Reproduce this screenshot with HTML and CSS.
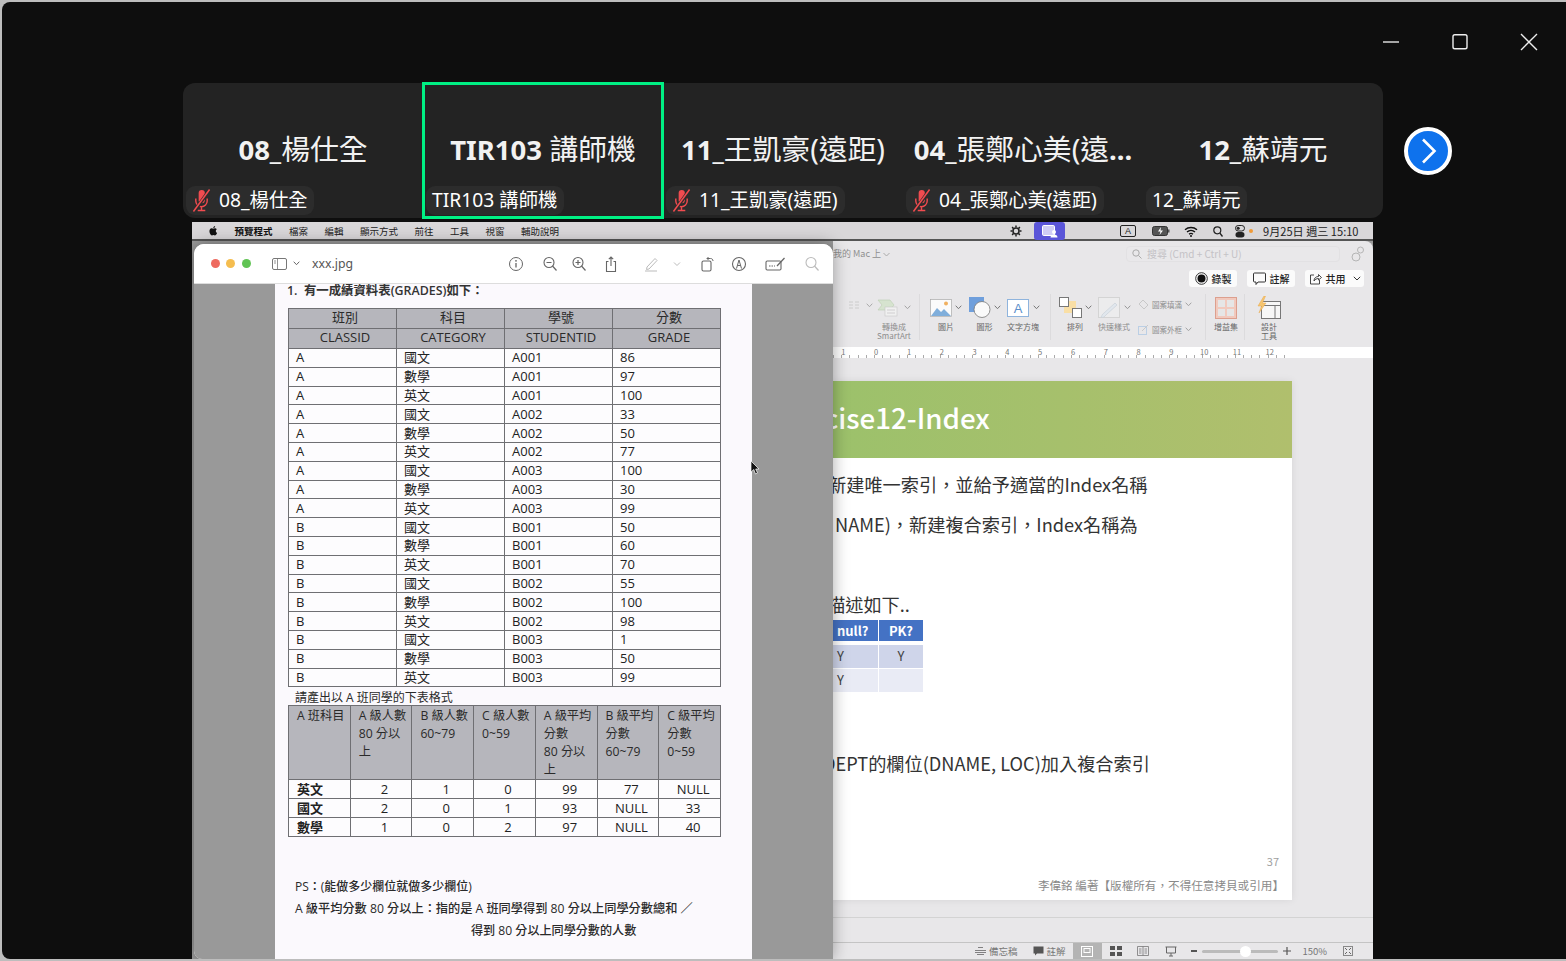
FILE: index.html
```html
<!DOCTYPE html>
<html lang="zh-Hant">
<head>
<meta charset="utf-8">
<title>TIR103</title>
<link rel="stylesheet" href="styles.css">
</head>
<body>
<div class="window">
  <header class="titlebar">
    <button class="winbtn"><svg width="18" height="18" viewBox="0 0 18 18"><path d="M1 9h16" stroke="#d8d8d8" stroke-width="1.4"/></svg></button>
    <button class="winbtn"><svg width="18" height="18" viewBox="0 0 18 18"><rect x="2" y="1.8" width="14" height="14" rx="1.8" fill="none" stroke="#eee" stroke-width="1.4"/></svg></button>
    <button class="winbtn"><svg width="18" height="18" viewBox="0 0 18 18"><path d="M1 1l16 16M17 1L1 17" stroke="#eee" stroke-width="1.4"/></svg></button>
  </header>

  <section class="strip-row">
    <div class="strip">
      <div class="tile"><div class="name"><b>08_</b>楊仕全</div><div class="pill"><svg class="mute" viewBox="0 0 20 24"><use href="#mic"/></svg>08_楊仕全</div></div>
      <div class="tile active"><div class="name"><b>TIR103</b>&nbsp;講師機</div><div class="pill nomic">TIR103 講師機</div></div>
      <div class="tile"><div class="name"><b>11_</b>王凱豪(遠距)</div><div class="pill"><svg class="mute" viewBox="0 0 20 24"><use href="#mic"/></svg>11_王凱豪(遠距)</div></div>
      <div class="tile"><div class="name"><b>04_</b>張鄭心美(遠<b>...</b></div><div class="pill"><svg class="mute" viewBox="0 0 20 24"><use href="#mic"/></svg>04_張鄭心美(遠距)</div></div>
      <div class="tile"><div class="name"><b>12_</b>蘇靖元</div><div class="pill nomic">12_蘇靖元</div></div>
    </div>
    <button class="next"><svg width="40" height="40" viewBox="0 0 40 40"><path d="M15 8.500l11.500 11.500L15 31.500" fill="none" stroke="#fff" stroke-width="2.600"/></svg></button>
  </section>

  <svg class="defs" width="0" height="0"><defs>
    <symbol id="mic" viewBox="0 0 20 24">
      <rect x="7" y="1" width="6.500" height="14" rx="3.200" fill="#f04b4f"/>
      <path d="M4 10v2.500a6 6 0 0 0 12 0V10M10 18.500V22M6 22.500h8" fill="none" stroke="#f04b4f" stroke-width="1.500"/>
      <path d="M19 0L2 24" stroke="#2c2c2c" stroke-width="3.600"/>
      <path d="M18.500 .5L1.500 23.500" stroke="#f04b4f" stroke-width="1.600"/>
    </symbol>
  </defs></svg>

  <main class="share">
    <div class="menubar">
      <svg class="apple" viewBox="0 0 24 24"><path d="M17.050 12.040c-.03-2.600 2.130-3.850 2.220-3.910-1.210-1.770-3.090-2.010-3.760-2.040-1.600-.16-3.120.94-3.930.94-.81 0-2.060-.92-3.390-.89-1.740.03-3.350 1.010-4.250 2.570-1.810 3.140-.46 7.800 1.300 10.350.86 1.250 1.890 2.650 3.240 2.600 1.300-.05 1.790-.84 3.360-.84 1.570 0 2.010.84 3.390.81 1.400-.02 2.280-1.270 3.140-2.530.99-1.450 1.400-2.850 1.420-2.930-.03-.01-2.720-1.040-2.740-4.130zM14.470 4.400c.72-.87 1.200-2.080 1.070-3.280-1.030.04-2.280.69-3.020 1.550-.66.77-1.240 2-1.080 3.180 1.150.09 2.320-.58 3.030-1.450z"/></svg>
      <b>預覽程式</b><span>檔案</span><span>編輯</span><span>顯示方式</span><span>前往</span><span>工具</span><span>視窗</span><span>輔助說明</span>
      <svg class="m-gear" viewBox="0 0 12 12"><circle cx="6" cy="6" r="3" fill="none" stroke="#222" stroke-width="1.500"/><path d="M6 .5v2M6 9.500v2M.5 6h2M9.500 6h2M2.100 2.100l1.400 1.400M8.500 8.500l1.400 1.400M2.100 9.900l1.400-1.400M8.500 3.500l1.400-1.400" stroke="#222" stroke-width="1.500"/></svg>
      <div class="m-purple"><svg width="16" height="13" viewBox="0 0 16 13"><rect x=".5" y=".5" width="12" height="10" rx="1.200" fill="#cfcdf5" stroke="#fff"/><circle cx="12" cy="7" r="2" fill="#fff"/><path d="M8.500 12.500c0-2 1.500-3 3.500-3s3.500 1 3.500 3z" fill="#fff"/></svg></div>
      <div class="m-a">A</div>
      <svg class="m-batt" viewBox="0 0 18 10"><rect x=".5" y=".5" width="15" height="9" rx="2" fill="#555" stroke="#333"/><path d="M9 1L6 5.500h2.500L7.500 9 11 4.500H8.500z" fill="#fff"/><rect x="16" y="3.500" width="1.500" height="3" fill="#555"/></svg>
      <svg class="m-wifi" viewBox="0 0 14 11"><path d="M1 3.800c3.400-3 8.600-3 12 0M3 6c2.300-2 5.700-2 8 0M5 8.200c1.200-1 2.800-1 4 0" fill="none" stroke="#111" stroke-width="1.400"/><circle cx="7" cy="10" r="1" fill="#111"/></svg>
      <svg class="m-search" viewBox="0 0 10 11"><circle cx="4.300" cy="4.300" r="3.500" fill="none" stroke="#222" stroke-width="1.200"/><path d="M6.800 7l2.700 3.500" stroke="#222" stroke-width="1.300"/></svg>
      <svg class="m-ctl" viewBox="0 0 10 13"><rect x=".5" y=".5" width="9" height="5.500" rx="2.700" fill="none" stroke="#222"/><rect x=".5" y="7" width="9" height="5.500" rx="2.700" fill="#222"/><circle cx="3.200" cy="3.200" r="1.500" fill="#222"/></svg>
      <i class="m-dot"></i>
      <span class="m-date">9月25日 週三 15:10</span>
    </div>

    <div class="desktop">
      <!-- PowerPoint window -->
      <section class="ppt">
        <div class="ppt-title">
          <span class="ppt-doc">我的 Mac 上 <svg width="7" height="5" viewBox="0 0 7 5"><path d="M.5 1l3 3 3-3" fill="none" stroke="#aaa"/></svg></span>
          <div class="ppt-search"><svg width="10" height="10" viewBox="0 0 10 10"><circle cx="4" cy="4" r="3.200" fill="none" stroke="#aaa"/><path d="M6.500 6.500l3 3" stroke="#aaa"/></svg>搜尋 (Cmd + Ctrl + U)</div>
          <svg class="ppt-people" width="14" height="16" viewBox="0 0 14 16"><circle cx="9.500" cy="4" r="3" fill="none" stroke="#b5b5b5"/><rect x="1" y="7" width="8" height="8" rx="4" fill="none" stroke="#b5b5b5"/></svg>
        </div>
        <div class="ppt-actions">
          <div class="act act-rec"><svg width="13" height="13" viewBox="0 0 13 13"><circle cx="6.500" cy="6.500" r="5.800" fill="none" stroke="#222" stroke-width=".9"/><circle cx="6.500" cy="6.500" r="4" fill="#111"/></svg>錄製</div>
          <div class="act act-cmt"><svg width="13" height="13" viewBox="0 0 13 13"><path d="M1.500 1h10a1 1 0 0 1 1 1v7a1 1 0 0 1-1 1H5l-2 2.500V10H1.500a1 1 0 0 1-1-1V2a1 1 0 0 1 1-1z" fill="none" stroke="#333"/></svg>註解</div>
          <div class="act act-share"><svg width="13" height="13" viewBox="0 0 13 13"><path d="M5 3H1.500v9h9V8M5 9c0-3 2-4.500 4.500-4.500V2.500L12.500 5.500 9.500 8V6.500C7.500 6.500 6 7.500 5 9z" fill="none" stroke="#333" stroke-width=".9"/></svg>共用<svg class="act-chev" width="8" height="5" viewBox="0 0 8 5"><path d="M.8.8L4 4 7.200.8" fill="none" stroke="#333"/></svg></div>
        </div>
        <div class="ribbon">
          <div class="rb-lead">
            <svg width="11" height="8" viewBox="0 0 11 8"><path d="M0 1h4M6 1h4M0 4h4M6 4h4M0 7h4M6 7h4" stroke="#ccc"/></svg>
            <svg class="chev" viewBox="0 0 7 5"><path d="M.7.7l2.800 3 2.800-3" fill="none" stroke="#aaa" stroke-width="1"/></svg>
          </div>
          <div class="tool t-smart faded">
            <div class="tool-icon"><svg width="24" height="18" viewBox="0 0 24 18"><path d="M1 1h12l4 5-4 5H1l4-5z" fill="#cfe2c5" stroke="#aac59b" stroke-width=".6"/><rect x="8" y="8" width="12" height="9" fill="#f4f4f4" stroke="#bbb" stroke-width=".6"/><path d="M10 11h8M10 14h8" stroke="#bbb" stroke-width=".8"/></svg><svg class="chev" viewBox="0 0 7 5"><path d="M.7.7l2.800 3 2.800-3" fill="none" stroke="#888"/></svg></div>
            <span>轉換成</span><span>SmartArt</span>
          </div>
          <i class="rb-sep s1"></i>
          <div class="tool t-pic">
            <div class="tool-icon"><svg width="22" height="18" viewBox="0 0 22 18"><rect x=".5" y=".5" width="21" height="17" fill="#fbfbfb" stroke="#aaa" stroke-width=".7"/><path d="M1 17l6-8 4 4 3-3 7 7z" fill="#7faedb"/><circle cx="16" cy="4.500" r="2" fill="#f0b060"/></svg><svg class="chev" viewBox="0 0 7 5"><path d="M.7.7l2.800 3 2.800-3" fill="none" stroke="#777"/></svg></div>
            <span>圖片</span>
          </div>
          <div class="tool t-shape">
            <div class="tool-icon"><svg width="23" height="21" viewBox="0 0 23 21"><rect x="1" y="0" width="15" height="15" fill="#6f9fdc"/><circle cx="14" cy="12.500" r="8" fill="#fafafa" stroke="#777" stroke-width=".8"/></svg><svg class="chev" viewBox="0 0 7 5"><path d="M.7.7l2.800 3 2.800-3" fill="none" stroke="#777"/></svg></div>
            <span>圖形</span>
          </div>
          <div class="tool t-text">
            <div class="tool-icon"><svg width="24" height="20" viewBox="0 0 24 20"><rect x="1.500" y="1.500" width="21" height="17" fill="#fff" stroke="#8fb4dd" stroke-width="1"/><text x="12" y="15" font-size="13" text-anchor="middle" fill="#5b8fcb" font-family="Liberation Sans">A</text></svg><svg class="chev" viewBox="0 0 7 5"><path d="M.7.7l2.800 3 2.800-3" fill="none" stroke="#777"/></svg></div>
            <span>文字方塊</span>
          </div>
          <i class="rb-sep s2"></i>
          <div class="tool t-arr">
            <div class="tool-icon"><svg width="23" height="21" viewBox="0 0 23 21"><rect x="5" y="4" width="12" height="12" fill="#f9dfa6"/><rect x=".5" y=".5" width="9" height="9" fill="#fff" stroke="#777"/><rect x="13.500" y="11.500" width="9" height="9" fill="#fff" stroke="#777"/></svg><svg class="chev" viewBox="0 0 7 5"><path d="M.7.7l2.800 3 2.800-3" fill="none" stroke="#777"/></svg></div>
            <span>排列</span>
          </div>
          <div class="tool t-quick faded">
            <div class="tool-icon"><svg width="23" height="22" viewBox="0 0 23 22"><rect x=".5" y=".5" width="21" height="20" fill="#efefef" stroke="#ccc"/><path d="M19 8L9 17l-3 3c-1 .5-3 .5-3 0 1-1 1-3 3-4L17 6z" fill="#dfe7ef" stroke="#b5c2cf" stroke-width=".6"/></svg><svg class="chev" viewBox="0 0 7 5"><path d="M.7.7l2.800 3 2.800-3" fill="none" stroke="#777"/></svg></div>
            <span>快速樣式</span>
          </div>
          <div class="tool-col faded">
            <div class="col-row"><svg width="11" height="11" viewBox="0 0 11 11"><path d="M5 1l5 5-4 4-5-5z" fill="none" stroke="#bbb"/></svg>圖案填滿<svg class="chev" viewBox="0 0 7 5"><path d="M.7.7l2.800 3 2.800-3" fill="none" stroke="#888"/></svg></div>
            <div class="col-row"><svg width="11" height="11" viewBox="0 0 11 11"><rect x=".5" y="2.500" width="8" height="8" fill="none" stroke="#a9c6e4"/><path d="M4 7l6-6" stroke="#bbb"/></svg>圖案外框<svg class="chev" viewBox="0 0 7 5"><path d="M.7.7l2.800 3 2.800-3" fill="none" stroke="#888"/></svg></div>
          </div>
          <i class="rb-sep s3"></i>
          <div class="tool t-add">
            <div class="tool-icon"><svg width="22" height="22" viewBox="0 0 22 22"><rect x=".5" y=".5" width="21" height="21" fill="#f1c9bd" stroke="#dc9f8e"/><rect x="3" y="3" width="7" height="7" fill="#e6e6e6"/><rect x="12" y="3" width="7" height="7" fill="#e6e6e6"/><rect x="3" y="12" width="7" height="7" fill="#e6e6e6"/><rect x="12" y="12" width="7" height="7" fill="#e6e6e6"/></svg></div>
            <span>增益集</span>
          </div>
          <i class="rb-sep s4"></i>
          <div class="tool t-design">
            <div class="tool-icon"><svg width="24" height="23" viewBox="0 0 24 23"><rect x="4.500" y="5.500" width="19" height="17" fill="#f7f7f7" stroke="#777"/><path d="M4.500 9.500h19M18 9.500v13" stroke="#777"/><path d="M7 0L1 10h3.500L2 17l7-10H5.500L8.500 0z" fill="#f6c56f" stroke="#e8a84c" stroke-width=".5"/></svg></div>
            <span>設計</span><span>工具</span>
          </div>
        </div>
        <div class="ruler">
          <span>1</span><span>0</span><span>1</span><span>2</span><span>3</span><span>4</span><span>5</span><span>6</span><span>7</span><span>8</span><span>9</span><span>10</span><span>11</span><span>12</span>
        </div>
        <div class="canvas">
          <article class="slide">
            <div class="slide-head">cise12-Index</div>
            <p class="l1">新建唯一索引，並給予適當的Index名稱</p>
            <p class="l2">NAME)，新建複合索引，Index名稱為</p>
            <p class="l3">描述如下..</p>
            <div class="s-table">
              <div class="c h">null?</div><div class="c h m">PK?</div>
              <div class="c r1">Y</div><div class="c r1 m">Y</div>
              <div class="c r2">Y</div><div class="c r2 m"></div>
            </div>
            <p class="l4">DEPT的欄位(DNAME, LOC)加入複合索引</p>
            <div class="s-num">37</div>
            <div class="s-credit">李偉銘 編著【版權所有，不得任意拷貝或引用】</div>
          </article>
        </div>
        <div class="notes"></div>
        <footer class="status">
          <span class="st st-notes"><svg width="11" height="10" viewBox="0 0 11 10"><path d="M3 1.500h5M0 4.500h11M0 6.500h11M2 8.500h7" stroke="#666" stroke-width=".8"/></svg>備忘稿</span>
          <span class="st st-cmt"><svg width="11" height="10" viewBox="0 0 11 10"><path d="M.5.500h10v7H4L2 9.500v-2H.5z" fill="#555"/></svg>註解</span>
          <span class="st-view"><svg width="12" height="11" viewBox="0 0 12 11"><rect x=".5" y=".5" width="11" height="10" fill="none" stroke="#fff"/><rect x="3" y="2.500" width="6" height="4" fill="none" stroke="#fff"/></svg></span>
          <svg class="st-grid" width="12" height="10" viewBox="0 0 12 10"><path d="M0 0h5v4H0zM7 0h5v4H7zM0 6h5v4H0zM7 6h5v4H7z" fill="#555"/></svg>
          <svg class="st-book" width="12" height="10" viewBox="0 0 12 10"><path d="M.5.500h11v9H.5zM6 .5v9M2 3h2.500M2 5h2.500M2 7h2.500M7.500 3H10M7.500 5H10M7.500 7H10" fill="none" stroke="#777" stroke-width=".8"/></svg>
          <svg class="st-pres" width="12" height="11" viewBox="0 0 12 11"><path d="M.5 1h11M1.500 1v6h9V1M6 7v3M4 10h4" fill="none" stroke="#666"/></svg>
          <i class="st-minus"></i>
          <div class="st-slider"><i></i></div>
          <svg class="st-plus" width="8" height="8" viewBox="0 0 8 8"><path d="M0 4h8M4 0v8" stroke="#555" stroke-width="1.200"/></svg>
          <span class="st-zoom">150%</span>
          <svg class="st-fit" width="10" height="10" viewBox="0 0 10 10"><rect x=".5" y=".5" width="9" height="9" fill="none" stroke="#888"/><path d="M2 2l2 2M8 2L6 4M2 8l2-2M8 8L6 6" stroke="#666"/></svg>
        </footer>
      </section>

      <!-- Preview window -->
      <section class="preview">
        <div class="pv-bar">
          <div class="dots"><i class="red"></i><i class="yellow"></i><i class="green"></i></div>
          <svg class="pv-side" width="15" height="12" viewBox="0 0 15 12"><rect x=".5" y=".5" width="14" height="11" rx="1.500" fill="none" stroke="#777"/><path d="M5.500.5v11M2 3h2M2 5h2" stroke="#777" stroke-width=".8"/></svg>
          <svg class="pv-chev" width="7" height="5" viewBox="0 0 7 5"><path d="M.7.7l2.800 3 2.800-3" fill="none" stroke="#666"/></svg>
          <span class="pv-name">xxx.jpg</span>
          <div class="pv-tools">
            <svg viewBox="0 0 24 16"><circle cx="12" cy="8" r="6.500" fill="none" stroke="#666"/><path d="M12 7v4.500" stroke="#666" stroke-width="1.300"/><circle cx="12" cy="4.800" r=".9" fill="#666"/></svg>
            <svg viewBox="0 0 24 16"><circle cx="11" cy="6.500" r="5" fill="none" stroke="#666" stroke-width="1.100"/><path d="M8.500 6.500h5M14.500 10l4 4.500" stroke="#666" stroke-width="1.200"/></svg>
            <svg viewBox="0 0 24 16"><circle cx="11" cy="6.500" r="5" fill="none" stroke="#666" stroke-width="1.100"/><path d="M8.500 6.500h5M11 4v5M14.500 10l4 4.500" stroke="#666" stroke-width="1.200"/></svg>
            <svg viewBox="0 0 24 16"><path d="M9.500 5.500H7.500v10h9v-10h-2M12 10V1M9.800 3.200L12 1l2.200 2.200" fill="none" stroke="#666" stroke-width="1.100"/></svg>
            <svg class="dim" viewBox="0 0 24 16"><path d="M8 11l8-8.500 2 2L10 13l-2.500.5zM6 15h12" fill="none" stroke="#bbb" stroke-width="1"/></svg>
            <svg class="dim" viewBox="0 0 24 16"><path d="M9 6.500l3 3 3-3" fill="none" stroke="#bbb"/></svg>
            <svg viewBox="0 0 24 16"><rect x="7" y="5" width="9" height="10" rx="1.500" fill="none" stroke="#666" stroke-width="1.100"/><path d="M12 2.500h3.500c1.500 0 2.500 1 2.500 2.500M13.500 1l-1.500 1.500L13.500 4" fill="none" stroke="#666"/></svg>
            <svg viewBox="0 0 24 16"><circle cx="12" cy="8" r="6.500" fill="none" stroke="#666" stroke-width="1.100"/><path d="M9.500 12.500L12 4l2.500 8.500M10.500 9.500h3" fill="none" stroke="#666"/></svg>
            <svg viewBox="0 0 24 16"><rect x="3" y="5" width="15" height="9" rx="1.200" fill="none" stroke="#666" stroke-width="1.100"/><path d="M6 10h6" stroke="#666" stroke-width="1.200" stroke-dasharray="1.500 1"/><path d="M14 10l7.500-8" stroke="#666" stroke-width="1.200"/></svg>
            <svg class="dim" viewBox="0 0 24 16"><circle cx="11" cy="6.500" r="5" fill="none" stroke="#bbb" stroke-width="1.100"/><path d="M14.500 10l4 4.500" stroke="#bbb" stroke-width="1.200"/></svg>
          </div>
        </div>
        <div class="pv-body">
          <div class="page">
            <h3 class="q">1.&nbsp; 有一成績資料表(GRADES)如下：</h3>
            <table class="t1">
              <thead>
                <tr><th>班別</th><th>科目</th><th>學號</th><th>分數</th></tr>
                <tr><th>CLASSID</th><th>CATEGORY</th><th>STUDENTID</th><th>GRADE</th></tr>
              </thead>
              <tbody>
                <tr><td>A</td><td>國文</td><td>A001</td><td>86</td></tr>
                <tr><td>A</td><td>數學</td><td>A001</td><td>97</td></tr>
                <tr><td>A</td><td>英文</td><td>A001</td><td>100</td></tr>
                <tr><td>A</td><td>國文</td><td>A002</td><td>33</td></tr>
                <tr><td>A</td><td>數學</td><td>A002</td><td>50</td></tr>
                <tr><td>A</td><td>英文</td><td>A002</td><td>77</td></tr>
                <tr><td>A</td><td>國文</td><td>A003</td><td>100</td></tr>
                <tr><td>A</td><td>數學</td><td>A003</td><td>30</td></tr>
                <tr><td>A</td><td>英文</td><td>A003</td><td>99</td></tr>
                <tr><td>B</td><td>國文</td><td>B001</td><td>50</td></tr>
                <tr><td>B</td><td>數學</td><td>B001</td><td>60</td></tr>
                <tr><td>B</td><td>英文</td><td>B001</td><td>70</td></tr>
                <tr><td>B</td><td>國文</td><td>B002</td><td>55</td></tr>
                <tr><td>B</td><td>數學</td><td>B002</td><td>100</td></tr>
                <tr><td>B</td><td>英文</td><td>B002</td><td>98</td></tr>
                <tr><td>B</td><td>國文</td><td>B003</td><td>1</td></tr>
                <tr><td>B</td><td>數學</td><td>B003</td><td>50</td></tr>
                <tr><td>B</td><td>英文</td><td>B003</td><td>99</td></tr>
              </tbody>
            </table>
            <p class="sub">請產出以 A 班同學的下表格式</p>
            <table class="t2">
              <thead>
                <tr><th>A 班科目</th><th>A 級人數<br>80 分以<br>上</th><th>B 級人數<br>60~79</th><th>C 級人數<br>0~59</th><th>A 級平均<br>分數<br>80 分以<br>上</th><th>B 級平均<br>分數<br>60~79</th><th>C 級平均<br>分數<br>0~59</th></tr>
              </thead>
              <tbody>
                <tr><td>英文</td><td>2</td><td>1</td><td>0</td><td>99</td><td>77</td><td>NULL</td></tr>
                <tr><td>國文</td><td>2</td><td>0</td><td>1</td><td>93</td><td>NULL</td><td>33</td></tr>
                <tr><td>數學</td><td>1</td><td>0</td><td>2</td><td>97</td><td>NULL</td><td>40</td></tr>
              </tbody>
            </table>
            <p class="ps">PS：(能做多少欄位就做多少欄位)</p>
            <p class="ps2">A 級平均分數 80 分以上：指的是 A 班同學得到 80 分以上同學分數總和 ／</p>
            <p class="ps3">得到 80 分以上同學分數的人數</p>
          </div>
        </div>
        <svg class="cursor" width="10" height="15" viewBox="0 0 10 15"><path d="M1 1v11l2.800-2.500L5.500 14l2-1-1.800-4H9z" fill="#111" stroke="#fff" stroke-width=".7"/></svg>
      </section>
    </div>
  </main>
</div>
</body>
</html>
```
FILE: styles.css
```css
* { box-sizing: border-box; }
html, body { margin: 0; padding: 0; height: 100%; overflow: hidden; }
body {
  background: #bdbdbd;
  font-family: "Noto Sans", "Noto Sans CJK TC", sans-serif;
}
button { border: 0; background: none; padding: 0; cursor: default; }
p, h3 { margin: 0; }
.defs { position: absolute; }

.window {
  margin: 2px 0 0 2px;
  height: 957px;
  background: #0e0e0e;
  border-radius: 8px 0 0 8px;
  overflow: hidden;
}
.titlebar { height: 81px; display: flex; justify-content: flex-end; padding: 0 2.500px 2px 0; }
.winbtn { width: 69px; display: flex; align-items: center; justify-content: center; }

.strip-row { display: flex; align-items: center; padding-left: 181px; height: 135px; }
.strip {
  width: 1200px; height: 135px; display: flex;
  background: #232323; border-radius: 12px;
}
.tile {
  position: relative; flex: 0 0 240px; height: 135px;
  display: flex; align-items: center; justify-content: center;
  color: #f2f2f2;
}
.tile.active { outline: 3px solid #00f084; outline-offset: -2px; }
.name {
  font-family: "Noto Sans", "Noto Sans CJK TC", sans-serif;
  font-size: 28.800px; line-height: 36px; font-weight: 400; white-space: nowrap;
  padding-bottom: 2px;
}
.name b { font-weight: 700; font-size: 27.500px; }
.pill {
  position: absolute; left: 3px; bottom: 3px; height: 29px;
  display: flex; align-items: center; padding: 0 7px 3px 6px;
  background: #2c2c2c; border-radius: 9px;
  font-size: 19.300px; color: #fff; white-space: nowrap;
  font-family: "Noto Sans", "Noto Sans CJK TC", sans-serif;
}
.mute { width: 19px; height: 23px; margin: 3px 8px 0 0; flex: none; }
.next {
  width: 48px; height: 48px; margin-left: 21px; border-radius: 50%;
  background: #0e72ed; border: 4px solid #fff;
  display: flex; align-items: center; justify-content: center; flex: none;
}

.share {
  width: 1181px; height: 737px; margin: 4px 0 0 190px;
  display: flex; flex-direction: column; overflow: hidden;
  font-family: "Noto Sans CJK TC", sans-serif;
}
.menubar {
  height: 19px; flex: none; display: flex; align-items: center;
  background: #d9d7d9; border-bottom: 2px solid #555;
  padding: 1px 14px 0 16px; gap: 16.500px;
  font-size: 9.500px; line-height: 15px; color: #222;
}
.menubar b { font-weight: 700; color: #111; }
.menubar > span, .menubar > b { flex: none; }
.apple { width: 11px; height: 12px; flex: none; fill: #111; margin-right: -1px; }
.m-gear { width: 12px; height: 12px; margin-left: auto; flex: none; margin-right: -4.500px; }
.m-purple {
  width: 31px; height: 18px; background: #5a55d8; border-radius: 3px;
  display: flex; align-items: center; justify-content: center; flex: none;
  margin: -1px 38.500px 0 0; align-self: flex-start;
}
.m-a {
  width: 16px; height: 12px; border: 1px solid #222; border-radius: 2px;
  font: 9px/10px "Liberation Sans", sans-serif; text-align: center; flex: none; margin-right: -.500px;
}
.m-batt { width: 18px; height: 10px; flex: none; margin-right: -2.500px; }
.m-wifi { width: 14px; height: 11px; flex: none; margin-right: -1.500px; }
.m-search { width: 10px; height: 11px; flex: none; margin-right: -4.500px; }
.m-ctl { width: 10px; height: 13px; flex: none; margin-right: -12.500px; }
.m-dot { width: 4px; height: 4px; border-radius: 50%; background: #f09a37; flex: none; margin-right: -6.500px; }
.m-date { width: 96px; white-space: nowrap; font-size: 11.100px; flex: none; }

.desktop { position: relative; flex: 1; background: #9a9a9a; }

/* Preview */
.preview {
  position: absolute; left: 2px; top: 3px; bottom: 0; width: 639px;
  display: flex; flex-direction: column;
  background: #fff; border-radius: 10px 10px 0 8px; overflow: hidden;
  box-shadow: 0 0 16px rgba(0,0,0,.35);
  z-index: 2;
}
.pv-bar {
  height: 40px; flex: none; display: flex; align-items: center;
  border-bottom: 1px solid #ddd; background: #fff;
}
.dots { width: 62px; display: flex; gap: 6.500px; padding-left: 16.500px; flex: none; }
.dots i { width: 9px; height: 9px; border-radius: 50%; }
.red { background: #ee6a5f; } .yellow { background: #f5bd4f; } .green { background: #61c454; }
.pv-side { margin-left: 16px; flex: none; }
.pv-chev { margin-left: 6px; flex: none; }
.pv-name { margin-left: 12px; font: 12.300px/14px "Noto Sans", sans-serif; color: #555; width: 192px; flex: none; }
.pv-tools {
  display: grid; grid-template-columns: 34px 29px 32px 40px 26px 30px 32px 36px 37px 24px;
  align-items: center;
}
.pv-tools svg { width: 24px; height: 16px; }
.pv-body { flex: 1; background: #999; padding-left: 81px; overflow: hidden; }
.page {
  width: 477px; height: 100%; background: #fbf9fd;
  padding-left: 12px; color: #2a2a2a;
  font-family: "Open Sans", "Noto Sans CJK TC", sans-serif;
  font-size: 13px;
}
.q { font-size: 12.400px; line-height: 14px; font-weight: 600; color: #333; height: 14px; }
table { border-collapse: collapse; table-layout: fixed; width: 433px; margin-left: 1px; }
td, th { padding: 0; border: 1px solid #6f6f73; font-weight: 400; overflow: hidden; white-space: nowrap; }
.t1 { margin-top: 10px; }
.t1 th { height: 20px; background: #b6b6bc; text-align: center; font-size: 13px; line-height: 17px; padding: 0 0 2px 5px; }
.t1 td { height: 18.800px; padding-left: 7px; line-height: 17px; background: #fdfcfe; color: #222; }
.sub { font-size: 12px; line-height: 14px; margin: 4px 0 0 8px; height: 14px; }
.t2 th { height: 74px; background: #b6b6bc; text-align: left; vertical-align: top; padding: 1px 0 0 8px; font-size: 12.200px; line-height: 18px; }
.t2 td { height: 19px; line-height: 17px; text-align: center; padding-left: 7px; background: #fdfcfe; color: #222; }
.t2 td:first-child { text-align: left; padding-left: 8px; font-weight: 700; }
.ps { margin: 42px 0 0 8px; font-size: 12px; line-height: 16px; font-weight: 500; }
.ps2 { margin: 6px 0 0 8px; font-size: 12.200px; line-height: 16px; font-weight: 500; white-space: nowrap; }
.ps3 { margin: 6px 0 0 184px; font-size: 12.100px; line-height: 16px; font-weight: 500; white-space: nowrap; }
.cursor { position: absolute; left: 556px; top: 216px; }

/* PowerPoint */
.ppt {
  position: absolute; left: 641px; top: 0; right: 0; bottom: 0;
  display: flex; flex-direction: column; overflow: hidden;
  background: #e8e7e9; border-radius: 0 8px 0 0; z-index: 1;
}
.ppt-title { height: 25px; flex: none; display: flex; align-items: center; position: relative; font-size: 9px; color: #8f8f8f; }
.ppt-doc { white-space: nowrap; width: 293px; flex: none; }
.ppt-search {
  width: 214px; height: 16px; flex: none;
  display: flex; align-items: center; gap: 5px; padding-left: 5px;
  background: #e9e8ea; border: 1px solid #e2e1e3; border-radius: 4px; font-size: 10px; color: #c4c2c6;
  white-space: nowrap;
}
.ppt-people { margin-left: 11px; flex: none; }
.ppt-actions {
  height: 17px; margin-top: 4px; flex: none; display: flex; padding-left: 356px; font-size: 10px; color: #222;
}
.act {
  height: 17px; background: #fbfbfb; border-radius: 3px; display: flex; align-items: center; justify-content: center; gap: 4px; flex: none; font-weight: 500;
}
.act-rec { width: 48px; }
.act-cmt { width: 48px; margin-left: 10px; }
.act-share { width: 59px; margin-left: 10px; }
.act-chev { margin-left: 3px; }
.ribbon {
  height: 52px; margin-top: 6px; flex: none; display: flex; align-items: flex-start;
  font-size: 8px; color: #666;
}
.rb-lead { width: 40px; flex: none; display: flex; justify-content: flex-end; align-items: center; gap: 6px; padding-top: 8px; }
.chev { width: 7px; height: 5px; flex: none; }
.tool { display: flex; flex-direction: column; align-items: center; flex: none; line-height: 9px; }
.tool-icon { height: 29px; display: flex; align-items: center; gap: 3px; white-space: nowrap; }
.faded { opacity: .7; }
.t-smart { width: 40px; margin-left: 1px; }
.rb-sep { width: 1px; height: 46px; background: #dcdbdd; flex: none; margin-top: 1px; }
.s1 { margin-left: 5px; } .s2 { margin-left: 7px; } .s3 { margin-left: 5px; } .s4 { margin-left: 3px; }
.t-pic { width: 40px; margin-left: 6px; }
.t-shape { width: 37px; }
.t-text { width: 40px; }
.t-arr { width: 40px; margin-left: 4px; }
.t-quick { width: 38px; }
.tool-col { width: 62px; margin-left: 5px; display: flex; flex-direction: column; gap: 14px; padding-top: 6px; flex: none; }
.col-row { display: flex; align-items: center; gap: 3px; line-height: 11px; white-space: nowrap; font-size: 7.500px; }
.t-add { width: 30px; margin-left: 5px; }
.t-design { width: 40px; margin-left: 4px; }
.ruler {
  height: 11px; margin-top: 2px; flex: none; display: flex;
  font-size: 7.500px; color: #777; line-height: 9px; text-align: center;
  background:
    repeating-linear-gradient(90deg, #aaa 0 1px, transparent 1px 8.200px) 0 8px / 458px 3px no-repeat,
    #fff;
}
.ruler span { width: 32.800px; flex: none; }
.ruler span:first-child { margin-left: -6px; }
.canvas { height: 559px; flex: none; padding: 23px 0 0 0; }
.slide {
  width: 459px; height: 519px; background: #fff; overflow: hidden;
  display: flex; flex-direction: column; color: #333;
  box-shadow: 0 0 8px rgba(0,0,0,.08);
  font-size: 18.200px; line-height: 24px; white-space: nowrap;
}
.slide-head {
  height: 77px; flex: none; background: linear-gradient(90deg, #9cc16b, #b0bf6d);
  color: #fff; font-size: 27.700px; font-weight: 500; line-height: 72px; text-indent: -9px;
}
.l1 { margin: 14px 0 0 -5px; }
.l2 { margin: 16px 0 0 2px; }
.l3 { margin: 56px 0 0 -6px; }
.s-table {
  margin-top: 4px; width: 90px; display: grid; grid-template-columns: 45px 44px;
  grid-template-rows: 24px 23px 23px; gap: 1px; font-size: 13px; line-height: 21px;
}
.c { padding-left: 4px; color: #444; }
.c.m { text-align: center; padding-left: 0; }
.c.h { background: #4472c4; color: #fff; font-weight: 700; height: 21px; }
.r1 { background: #cfd5ea; }
.r2 { background: #e9ebf5; }
.l4 { margin: 59px 0 0 -10px; }
.s-num { margin-top: auto; text-align: right; padding-right: 13px; font-size: 11px; line-height: 16px; color: #a0a0a0; }
.s-credit { text-align: right; padding: 0 8px 7px 0; margin-top: 8px; font-size: 11.600px; line-height: 16px; color: #8a8a8a; }
.notes { height: 25px; flex: none; border-top: 1px solid #d3d3d3; }
.status {
  flex: 1; display: flex; align-items: center; border-top: 1px solid #c4c4c4;
  padding-left: 142px; font-size: 9.500px; color: #777;
}
.st { display: flex; align-items: center; gap: 3px; white-space: nowrap; flex: none; }
.st-cmt { margin-left: 15px; }
.st-view { width: 29px; height: 100%; background: #b4b4b4; display: flex; align-items: center; justify-content: center; margin-left: 7px; flex: none; }
.st-grid { margin-left: 8px; flex: none; }
.st-book { margin-left: 15px; flex: none; }
.st-pres { margin-left: 16px; flex: none; }
.st-minus { width: 6px; height: 1.500px; background: #555; margin-left: 14px; flex: none; }
.st-slider { position: relative; width: 76px; height: 3px; margin-left: 5px; border-radius: 2px; background: #bbb; flex: none; }
.st-slider i { position: absolute; left: 38px; top: -4px; width: 11px; height: 11px; border-radius: 50%; background: #fff; }
.st-plus { margin-left: 5px; flex: none; }
.st-zoom { margin-left: 12px; flex: none; }
.st-fit { margin-left: 16px; flex: none; }
```
